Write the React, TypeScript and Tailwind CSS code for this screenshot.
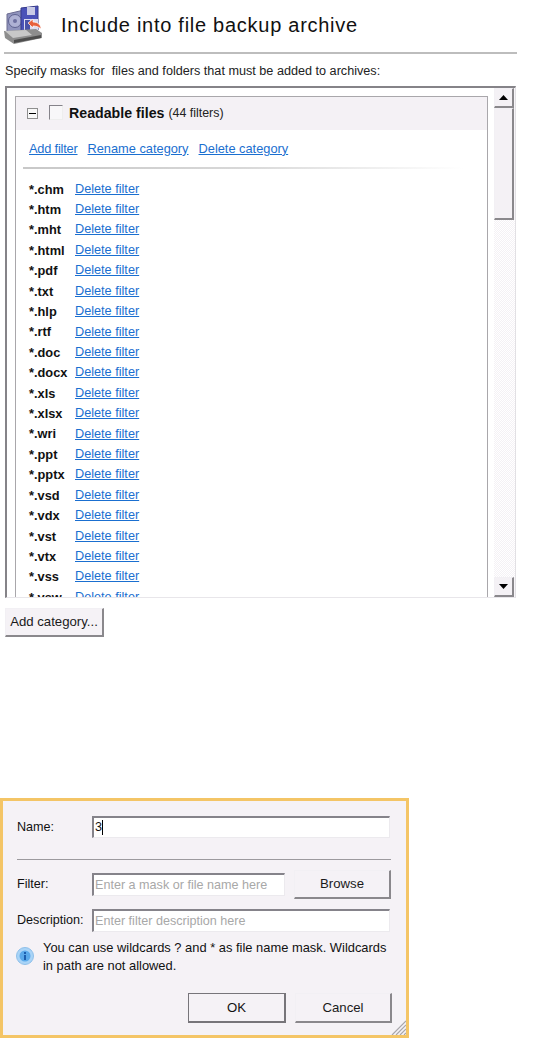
const filters = ["chm","htm","mht","html","pdf","txt","hlp","rtf","doc","docx","xls","xlsx","wri","ppt","pptx","vsd","vdx","vst","vtx","vss","vsw"];

const raised = "border border-t-[#f2f0f4] border-l-[#f2f0f4] border-r-[#8a888c] border-b-[#8a888c] border-r-2 border-b-2";
const sunken = "border border-t-2 border-l-2 border-t-[#85838a] border-l-[#85838a] border-r-[#eceaee] border-b-[#eceaee]";

function BackupIcon() {
  return (
    <svg width="44" height="46" viewBox="0 0 44 46" className="blur-[0.4px]">
      <path d="M7 14 L24 10 V31 L7 32 Z" fill="#9094bd" stroke="#6a6a90" />
      <circle cx="15" cy="21" r="6.5" fill="#aeb1d4" stroke="#5f6290" />
      <circle cx="15" cy="21" r="2" fill="#6d70a0" />
      <path d="M21 8 L38 6 V30 L21 32 Z" fill="#4a52b8" stroke="#35398a" />
      <rect x="27" y="7" width="8" height="8" fill="#c9cbe6" />
      <rect x="24" y="19" width="14" height="11" fill="#dcdcf0" />
      <rect x="25" y="20" width="5" height="10" fill="#4a52a8" />
      <path d="M4 31 L36 29 L42 33 L42 38 L14 44 L5 38 Z" fill="#8d8d8d" />
      <path d="M5 31 L26 30 L32 35 L13 38 Z" fill="#c8c8c8" />
      <path d="M14 40 L41 35 L41 38 L14 43 Z" fill="#4d4d4d" />
      <path d="M28 23 L33 19 V22 C38 22 41 25 41 29 C39 27 36 26 33 26 V28 Z" fill="#e8603c" stroke="#fff" strokeWidth="0.7" />
    </svg>
  );
}

function ArrowBtn({ dir }: { dir: "up" | "down" }) {
  return (
    <div className={`w-[20px] h-[20px] flex items-center justify-center bg-[#f4f1f5] ${raised}`}>
      <svg width="9" height="5" viewBox="0 0 9 5">
        <path d={dir === "up" ? "M0 5 L4.5 0 L9 5 Z" : "M0 0 L4.5 5 L9 0 Z"} fill="#000" />
      </svg>
    </div>
  );
}

function Btn({ w, h, children }: { w: string; h: string; children: string }) {
  return (
    <div className={`${w} ${h} flex items-center justify-center bg-[#f5f2f6] ${raised} text-[13.2px] text-[#1a1a1a]`}>
      {children}
    </div>
  );
}

export default function App() {
  return (
    <div className="w-[534px] h-[1041px] bg-white overflow-hidden text-[#1a1a1a] font-['Liberation_Sans',Arial,sans-serif] text-[12.6px]">
      <div className="h-[52px] flex items-start">
        <BackupIcon />
        <div className="ml-[17px] mt-[13px] text-[20px] leading-[24px] tracking-[0.73px] text-[#111]">Include into file backup archive</div>
      </div>
      <div className="ml-[4px] w-[513px] h-[2px] bg-[#bdbdbd]" />
      <div className="ml-[5px] mt-[10px] h-[14px] leading-[14px] text-[12.65px] text-[#222]">Specify masks for&nbsp; files and folders that must be added to archives:</div>

      <div className="ml-[5px] mt-[8px] w-[511px] h-[512px] flex border-t-2 border-l-2 border-t-[#858388] border-l-[#858388] border-r border-r-[#e2e0e4] border-b border-b-[#e8e6ea]">
        <div className="flex-1 min-w-0 pl-[8px] pt-[8px] overflow-hidden">
          <div className="w-[473px] h-[510px] border-t border-l border-r border-[#a9a7ab] bg-white overflow-hidden">
            <div className="h-[33px] bg-[#f4f1f5] flex items-center pl-[11px]">
              <div className="w-[11px] h-[11px] border border-[#8f8f8f] bg-[#f8f8f8] flex items-center justify-center">
                <div className="w-[7px] h-px bg-black" />
              </div>
              <div className="ml-[11px] mb-[3px] w-[14px] h-[15px] border border-t-[#85838a] border-l-[#85838a] border-r-[#eeeeee] border-b-[#eeeeee] bg-[#f8f7f9]" />
              <span className="ml-[6px] text-[14.2px] font-bold text-[#111]">Readable files</span>
              <span className="ml-[4px] text-[12.4px] text-[#222]">(44 filters)</span>
            </div>
            <div className="h-[37px] flex items-center pl-[13px] text-[12.8px] text-[#1a6fd0] underline">
              <span className="tracking-[-0.2px]">Add filter</span>
              <span className="ml-[10px]">Rename category</span>
              <span className="ml-[10px]">Delete category</span>
            </div>
            <div className="ml-[7px] w-[440px] h-[2px] bg-gradient-to-r from-[#c8c8c8] via-[#d8d8d8] to-white" />
            <div className="pt-[10px]">
              {filters.map((f) => (
                <div key={f} className="h-[20.42px] flex items-center pl-[13px]">
                  <span className="w-[46px] shrink-0 text-[12.8px] font-bold text-[#111]">*.{f}</span>
                  <span className="text-[12.7px] text-[#1a6fd0] underline">Delete filter</span>
                </div>
              ))}
            </div>
          </div>
        </div>
        <div className="w-[21px] shrink-0 flex flex-col ml-[6px] bg-[#f7f5f8]">
          <ArrowBtn dir="up" />
          <div className={`w-[20px] h-[112px] bg-[#f4f1f5] ${raised}`} />
          <div className="flex-1 bg-[repeating-conic-gradient(#f4f1f5_0_25%,#ffffff_0_50%)] bg-[length:2px_2px]" />
          <ArrowBtn dir="down" />
        </div>
      </div>

      <div className="ml-[5px] mt-[10px]">
        <Btn w="w-[99px]" h="h-[29px]">Add category...</Btn>
      </div>

      <div className="mt-[161px] w-[409px] h-[240px] border-[3px] border-[#f4c566] bg-[#f5f2f6] relative text-[#111]">
        <div className="flex items-center pl-[14px] pt-[15px]">
          <span className="w-[75px]">Name:</span>
          <div className={`w-[298px] h-[22px] bg-white ${sunken} pl-[1px] flex items-center`}>
            <span>3</span><span className="w-px h-[15px] bg-black" />
          </div>
        </div>
        <div className="ml-[14px] mr-[15px] mt-[21px] h-px bg-[#9c9a9e]" />
        <div className="flex items-center pl-[14px] pt-[10px]">
          <span className="w-[75px]">Filter:</span>
          <div className={`w-[193px] h-[23px] bg-white ${sunken} pl-[1px] flex items-center text-[#a8a8a8]`}>Enter a mask or file name here</div>
          <div className="ml-[9px]"><Btn w="w-[97px]" h="h-[29px]">Browse</Btn></div>
        </div>
        <div className="flex items-center pl-[14px] pt-[10px]">
          <span className="w-[75px]">Description:</span>
          <div className={`w-[298px] h-[23px] bg-white ${sunken} pl-[1px] flex items-center text-[#a8a8a8]`}>Enter filter description here</div>
        </div>
        <div className="flex pl-[12px] pt-[7px]">
          <svg width="20" height="20" viewBox="0 0 20 20" className="mt-[7px] shrink-0">
            <circle cx="10" cy="10" r="8.5" fill="#a9d4f7" stroke="#8fc0ea" />
            <circle cx="10" cy="10" r="5.5" fill="#5aa9ea" />
            <rect x="9" y="6" width="2" height="2" fill="#1c5fae" />
            <rect x="9" y="9" width="2" height="5" fill="#1c5fae" />
          </svg>
          <div className="ml-[8px] w-[348px] text-[12.9px] leading-[18px]">You can use wildcards ? and * as file name mask. Wildcards in path are not allowed.</div>
        </div>
        <div className="flex pl-[185px] pt-[18px] gap-[9px]">
          <div className="w-[98px] h-[30px] flex items-center justify-center border border-[#77757a] border-r-2 border-b-2 text-[13.2px]">OK</div>
          <Btn w="w-[97px]" h="h-[30px]">Cancel</Btn>
        </div>
        <svg width="16" height="16" viewBox="0 0 16 16" className="absolute right-0 bottom-0">
          <path d="M16 2 L2 16 M16 6 L6 16 M16 10 L10 16 M16 14 L14 16" stroke="#a8a6aa" strokeWidth="1.2" />
        </svg>
      </div>
    </div>
  );
}
